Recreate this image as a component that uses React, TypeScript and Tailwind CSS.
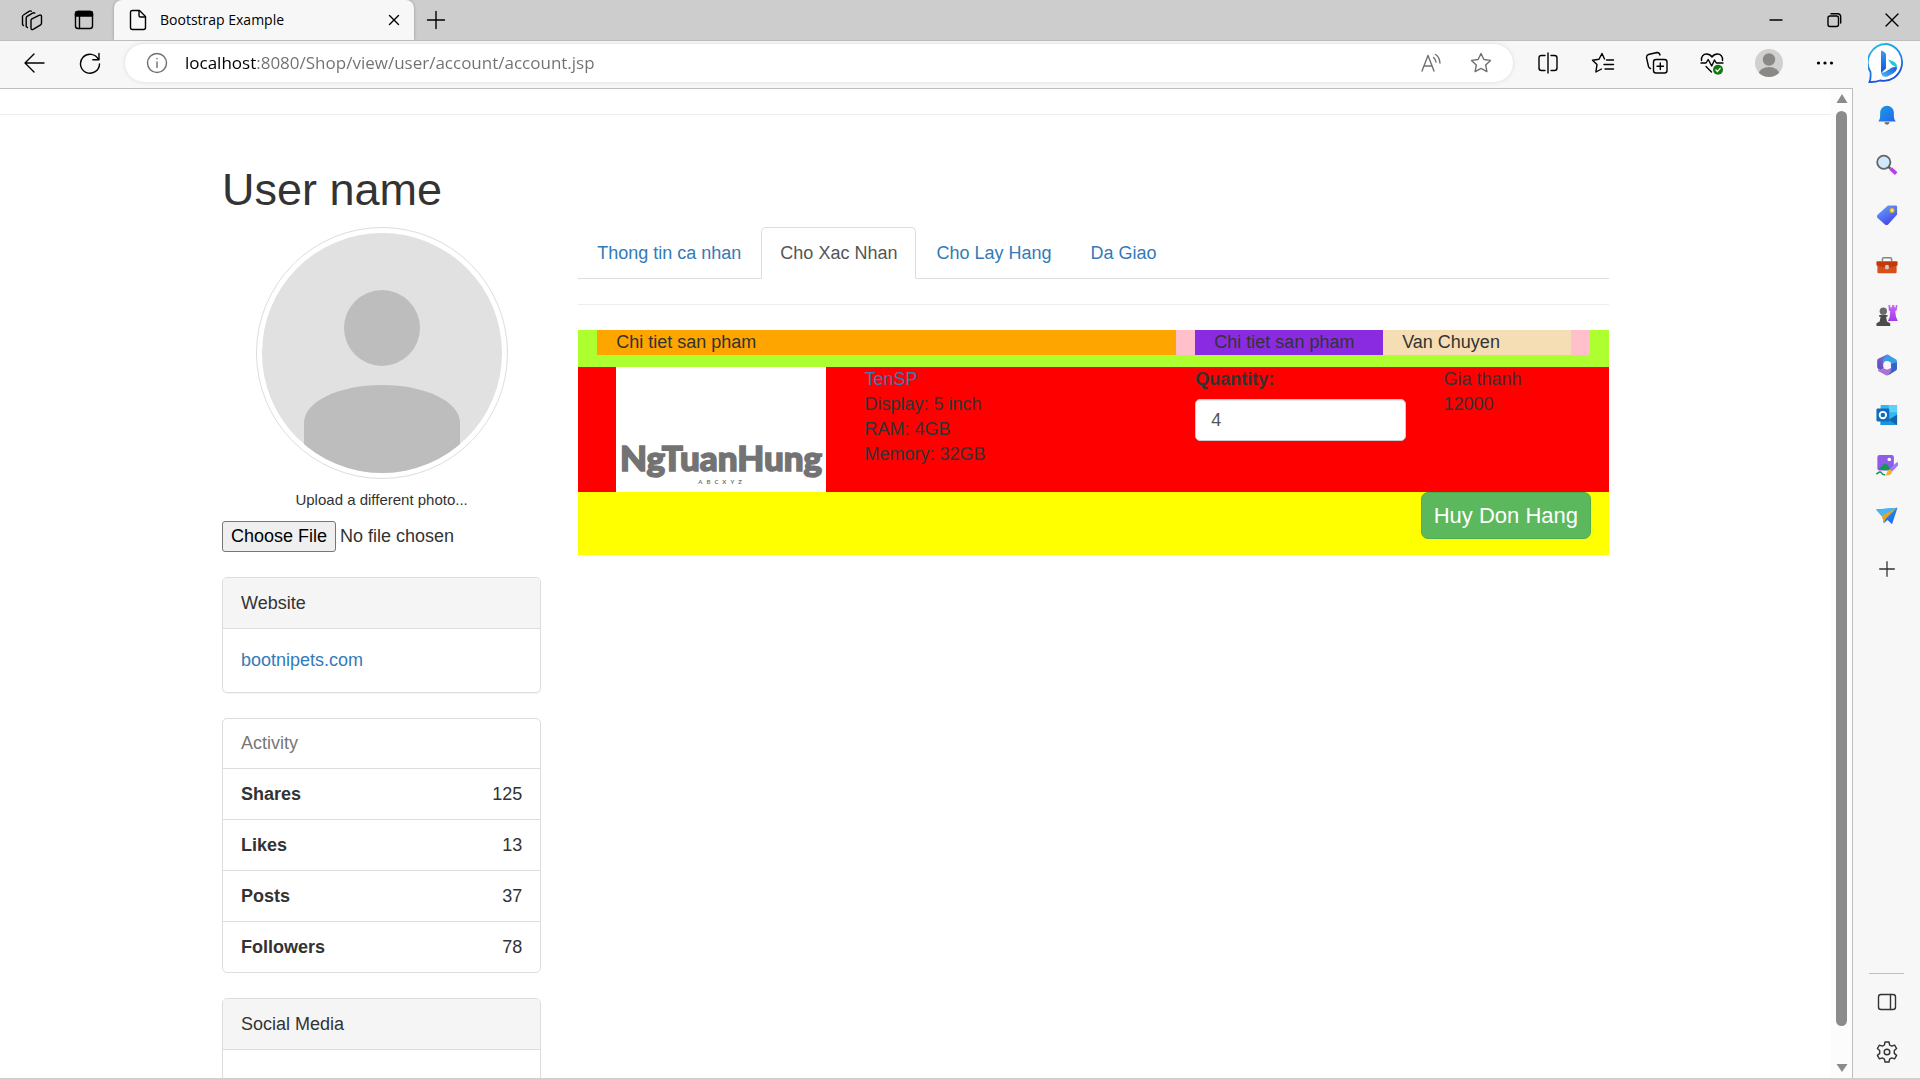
import React from "react";

type IconProps = { className?: string; children: React.ReactNode; viewBox?: string };

function Line({ className = "size-6", children, viewBox = "0 0 24 24" }: IconProps) {
  return (
    <svg className={className} viewBox={viewBox} fill="none" stroke="currentColor" strokeWidth="1.4" strokeLinecap="round" strokeLinejoin="round" aria-hidden="true">
      {children}
    </svg>
  );
}

const STAR = "M12 2.5l2.9 6 6.6.9-4.8 4.6 1.2 6.6L12 17.4l-5.9 3.2 1.2-6.6L2.5 9.400l6.600-.9z";

function TabStrip() {
  return (
    <header className="flex h-10 shrink-0 items-stretch bg-[#cdcdcd] text-black">
      <div className="flex w-[114px] items-center gap-7 pb-px pl-5">
        <button aria-label="Workspaces">
          <Line>
            <path d="M3.500 17.500l-1-.8V8.500q0-1 .9-1.500l6-3.800q1.200-.6 2 0" />
            <path d="M7.500 19.500l-1.300-.9V10q0-1 .9-1.600l5.500-3.300q1.200-.6 2.200 0" />
            <path d="M11.500 11.200l7.500-3.900q2.500-.8 2.500 1v7q0 1-.9 1.600l-7 4.200q-2.600 1.400-2.600-1v-7.300q0-1 .5-1.600z" />
          </Line>
        </button>
        <button aria-label="Tab actions">
          <Line>
            <rect x="3.500" y="3.500" width="17" height="17" rx="2.500" />
            <path d="M3.500 8V6Q3.500 3.500 6 3.500H18Q20.500 3.500 20.500 6V8Z" fill="currentColor" />
            <path d="M7.500 8v12" />
          </Line>
        </button>
      </div>
      <div className="flex w-[300px] items-center rounded-t-lg bg-[#f7f7f7] pb-px pl-3 pr-2 shadow-[0_0_3px_rgba(0,0,0,0.3)]">
        <Line>
          <path d="M6.500 2.500h7l6 6V19.500q0 2-2 2h-11q-2 0-2-2v-15q0-2 2-2z" />
          <path d="M13 2.800V7.500q0 1.500 1.500 1.500h4.500" />
        </Line>
        <span className="ml-[10px] flex-1 font-['Open_Sans',sans-serif] text-[14px]/5">Bootstrap Example</span>
        <button aria-label="Close tab">
          <Line><path d="M7.500 7.500l9 9m0-9l-9 9" /></Line>
        </button>
      </div>
      <button aria-label="New tab" className="ml-[10px] pb-px">
        <Line><path d="M12 3.500v17M3.500 12h17" /></Line>
      </button>
      <div className="ml-auto flex items-center gap-[34px] pb-px pr-4">
        <button aria-label="Minimize"><Line><path d="M6 12h12" /></Line></button>
        <button aria-label="Restore">
          <Line>
            <rect x="6" y="8" width="10.500" height="10.500" rx="2" />
            <path d="M9 5.700h6.500q3.200 0 3.200 3.200V15" />
          </Line>
        </button>
        <button aria-label="Close window"><Line><path d="M6 6l12 12m0-12L6 18" /></Line></button>
      </div>
    </header>
  );
}

function Bing() {
  return (
    <svg viewBox="1 1 38 40" className="h-10 w-[38px]" aria-hidden="true">
      <defs>
        <linearGradient id="bubble" x1="0" y1="0" x2=".4" y2="1"><stop stopColor="#25c8f0" /><stop offset="1" stopColor="#1d4fd8" /></linearGradient>
        <linearGradient id="stem" x1="0" y1="0" x2="0" y2="1"><stop stopColor="#3a9bf8" /><stop offset="1" stopColor="#1552dc" /></linearGradient>
        <linearGradient id="foot" x1="0" y1="1" x2="1" y2="0"><stop stopColor="#45bdf8" /><stop offset="1" stopColor="#1b55dd" /></linearGradient>
      </defs>
      <path d="M20 2a18 18 0 1 1-7 36.500q-4 1.700-10.500 1.500Q4 37 3.500 30A18.500 18.500 0 0 1 20 2z" fill="#fff" stroke="url(#bubble)" strokeWidth="1.800" />
      <path d="M14 8.500q3.500.5 5 3.500v14.500L14 31z" fill="url(#stem)" />
      <path d="M21 17.500q9 2 9 7v2.500q-1.500-3-5.500-4.500z" fill="#22c9dd" />
      <path d="M14 30.500q3 .5 5.500-1.500l5.500-3.500q5-1.500 5 1-.5 3-3.500 4.700l-6 3.200q-5.500 1.500-6.500-3.900z" fill="url(#foot)" />
    </svg>
  );
}

function Toolbar() {
  return (
    <div className="flex h-12 shrink-0 items-center border-t border-[#bdbdbd] bg-[#f7f7f7] pb-[3px] text-black">
      <div className="flex w-[125px] items-center gap-8 pl-[22px]">
        <button aria-label="Back"><Line><path d="M22 12H3M12 3L3 12l9 9" /></Line></button>
        <button aria-label="Reload">
          <Line><path d="M20.500 8.500A9.500 9.500 0 1 0 21.500 13M21 2.500v6.200h-6.200" /></Line>
        </button>
      </div>
      <div className="flex h-[38px] flex-1 items-center rounded-full bg-white px-5 text-[#707070] shadow-[0_0_4px_rgba(0,0,0,0.12)]">
        <button aria-label="Site information">
          <Line><circle cx="12" cy="12" r="9.500" /><path d="M12 11v5.500M12 7.500v.2" /></Line>
        </button>
        <input
          aria-label="Address"
          className="ml-4 min-w-0 flex-1 bg-[linear-gradient(to_right,#000_71px,#707070_71px)] bg-clip-text font-['Open_Sans',sans-serif] text-[17px]/7 text-transparent caret-black outline-none"
          defaultValue="localhost:8080/Shop/view/user/account/account.jsp"
        />
        <div className="flex items-center gap-[26px]">
          <button aria-label="Read aloud">
            <Line><path d="M3 20L9 4.500 15 20M5.300 15h7.500M14.500 6.500q2 1.500 2.500 4.500M16.500 3.500q4 2.500 4.500 8.500" /></Line>
          </button>
          <button aria-label="Add to favorites"><Line><path d={STAR} /></Line></button>
        </div>
      </div>
      <div className="flex w-[407px] items-center justify-between pl-[23px] pr-[14px]">
        <button aria-label="Split screen">
          <Line><path d="M12 2v20M9 4.500H5.500q-2.500 0-2.500 2.500v10q0 2.500 2.500 2.500H9M15 4.500h3.500q2.500 0 2.500 2.500v10q0 2.500-2.500 2.500H15" /></Line>
        </button>
        <button aria-label="Favorites">
          <Line><path d="M13.500 8L11 2.500 8 8.300 1.500 9.200 6 13.600 4.900 21 10.500 18M15.500 9h7M13 13.500h9.500M14 18h8.500" /></Line>
        </button>
        <button aria-label="Collections">
          <Line>
            <rect x="8.500" y="8.500" width="13.500" height="13.500" rx="2.500" />
            <path d="M15.300 12v6.500M12 15.300h6.500M5.500 17.500Q4 17 3.500 15.500L1.500 6.500Q1.500 4 3.500 3.500l8.500-2q2.500 0 3 2.500" />
          </Line>
        </button>
        <button aria-label="Browser essentials">
          <Line>
            <path d="M1.500 9.500C1 5.500 3.500 3 6.500 3q3.500 0 5.500 3 2-3 5.500-3c3 0 5.500 2.500 5 6.500M1 12h5l2.200-3.500 3.500 6.500 2.800-6 1.800 3H23M6 15.500l5.500 5.500" />
            <circle cx="18" cy="18.700" r="5" fill="#107c10" stroke="none" />
            <path d="M16 18.900l1.500 1.500 2.700-3" stroke="#fff" />
          </Line>
        </button>
        <button aria-label="Profile">
          <svg viewBox="0 0 28 28" className="size-7" aria-hidden="true">
            <clipPath id="profile"><circle cx="14" cy="14" r="14" /></clipPath>
            <g clipPath="url(#profile)"><rect width="28" height="28" fill="#d2d0ce" /><circle cx="14" cy="10.500" r="6.200" fill="#8a8886" /><ellipse cx="14" cy="25.500" rx="10.500" ry="7.500" fill="#8a8886" /></g>
          </svg>
        </button>
        <button aria-label="Settings and more">
          <svg viewBox="0 0 24 24" className="size-6" aria-hidden="true"><circle cx="5.500" cy="12" r="1.600" /><circle cx="12" cy="12" r="1.600" /><circle cx="18.500" cy="12" r="1.600" /></svg>
        </button>
        <button aria-label="Bing chat"><Bing /></button>
      </div>
    </div>
  );
}

const sideIcons: { name: string; art: React.ReactNode }[] = [
  { name: "Notifications", art: <><path d="M2.500 19q2-2 2-5V9.500a7.500 7.500 0 0 1 15 0V14q0 3 2 5z" fill="url(#s-blue)" /><path d="M9 20h6q-1 2.500-3 2.500T9 20z" fill="#666" /></> },
  { name: "Search", art: <><circle cx="8.500" cy="9" r="7.200" fill="#cfeafc" stroke="#666" strokeWidth="2" /><path d="M16 16l6 5.500" stroke="#b83df0" strokeWidth="4" /><path d="M13.500 14l2.300 2" stroke="#555" strokeWidth="2.500" /></> },
  { name: "Shopping", art: <><path d="M13 1.500h8.500q1.500 0 1.500 1.500v8.500L13 22.500q-1.500 1-3 0L1.500 15q-1-1.500 0-3z" fill="url(#s-tag)" /><circle cx="17.500" cy="7" r="2" fill="#eee" stroke="#e9b800" strokeWidth="1.500" /></> },
  { name: "Tools", art: <><path d="M7 8V5.500Q7 4 8.500 4h7Q17 4 17 5.500V8" fill="none" stroke="#858585" strokeWidth="1.600" /><rect x="1.500" y="10" width="21" height="11" rx="1.500" fill="#d94f1a" /><path d="M.5 9q0-1 1-1h21q1 0 1 1v3.500q-11.500 4-23 0z" fill="#c23a0c" /><rect x="10" y="12" width="4" height="4.500" rx="1" fill="#ccc" /></> },
  { name: "Games", art: <><path d="M13.500 1h2v2.500h2V1H20v2.500h1.500V1h2l-1 6-1.500 1 .8 6 2 4.500H13l2-4.500.5-6-1.500-1z" fill="url(#s-rook)" /><circle cx="8" cy="7.800" r="4" fill="#6b6b6b" /><path d="M3.500 12h9v2H11l1 5 3.500 2v3H.5v-3L4 19l1-5H3.500z" fill="#4b4b4b" /></> },
  { name: "Microsoft 365", art: <><path d="M12 .5q1.500 0 3 1L8.500 6v9.500L5 17.500l-3-1.800q-.7-.7-.7-2V7.300q0-1.300 1-2z" fill="url(#s-365)" /><path d="M13 .8L22 6q.8.600.8 1.800V16l-6.800-2.500V9L12 7.500 8.500 9V5z" fill="#379fe6" /><path d="M22.800 9v7.300q0 1.200-1 1.800l-8.300 5-.5-4.600 3.500-2.300V11z" fill="#3b5fc2" /><path d="M2.500 16l2.500 1.500 3.500-2 3.500 1.800 4.500-2.200v3.400l-3.500 4.600q-1 .5-2.200 0L2.300 18.500z" fill="#a974d6" /><circle cx="12" cy="12" r="4.200" fill="#f7f7f7" /></> },
  { name: "Outlook", art: <><rect x="5" y="1" width="18" height="22" rx="1" fill="#35b6ef" /><path d="M14 1h8q1 0 1 1v7h-9z" fill="#5fd0f7" /><path d="M5 23L23 11.500V23z" fill="#1464ad" /><path d="M5 12l18 11H5z" fill="#1c93df" /><rect x=".5" y="5" width="14" height="14" rx="1.200" fill="#0f6cbd" /><circle cx="7.500" cy="12" r="3.500" fill="none" stroke="#fff" strokeWidth="2" /></> },
  { name: "Image creator", art: <><rect x="1.500" y="1" width="18" height="17" rx="2.500" fill="#8f5be8" /><circle cx="14.500" cy="6" r="2" fill="#fff" /><path d="M2.500 17L8 11.500q2-1.500 4 0l4.500 5.500q-5 1.500-14 0z" fill="#16945a" /><path d="M.5 22q4-4 5.500-1.500T10 22.500" fill="none" stroke="#16945a" strokeWidth="1.600" /><path d="M16 18l7-7" stroke="#9c7bf0" strokeWidth="3.600" strokeLinecap="round" /><path d="M10 23.500q1.500-1 2-3.500t3.500-3l2 2.200q0 4.500-7.500 4.300z" fill="#f5b32a" /></> },
  { name: "Drop", art: <><path d="M0 6l23.500-2-6 18-5-4.500L8.500 21 7 14z" fill="url(#s-blue)" /><path d="M0 6l23.500-2L7 13z" fill="#45b7f5" /><path d="M6.500 12.500L23 4.200 10.500 16l-2 5z" fill="#f0a11e" /></> },
];

function SideRail() {
  return (
    <aside className="flex w-[67px] shrink-0 flex-col items-center bg-[#f7f7f7] pt-4">
      <svg width="0" height="0" className="absolute" aria-hidden="true">
        <defs>
          <linearGradient id="s-blue" x1="0" y1="0" x2="1" y2="1"><stop stopColor="#149fe0" /><stop offset="1" stopColor="#2b63f0" /></linearGradient>
          <linearGradient id="s-tag" x1="0" y1="0" x2=".6" y2="1"><stop stopColor="#69acf8" /><stop offset="1" stopColor="#4346ee" /></linearGradient>
          <linearGradient id="s-rook" x1="0" y1="0" x2="0" y2="1"><stop stopColor="#cc66fa" /><stop offset="1" stopColor="#a13be8" /></linearGradient>
          <linearGradient id="s-365" x1="0" y1="1" x2="1" y2="0"><stop stopColor="#5b48b8" /><stop offset="1" stopColor="#8a78d8" /></linearGradient>
        </defs>
      </svg>
      <nav aria-label="Sidebar" className="flex flex-col items-center gap-[28px]">
        {sideIcons.map((icon) => (
          <button key={icon.name} aria-label={icon.name}>
            <svg viewBox="0 0 24 24" className="size-[22px]" aria-hidden="true">{icon.art}</svg>
          </button>
        ))}
        <button aria-label="Customize" className="mt-1"><Line className="size-[22px]"><path d="M12 4v16M4 12h16" /></Line></button>
      </nav>
      <div className="mt-auto flex w-[35px] flex-col items-center gap-[26px] border-t border-[#bfbfbf] pb-[14px] pt-4">
        <button aria-label="Hide sidebar">
          <Line><rect x="3.500" y="4.500" width="17" height="15" rx="2.500" /><path d="M15.500 4.500v15" /></Line>
        </button>
        <button aria-label="Sidebar settings">
          <Line>
            <path d="M10 2h4l.6 3 2 1.100 3-1 2 3.400-2.300 2v2.900l2.300 2-2 3.500-3-1-2 1.200-.6 2.900h-4l-.6-2.900-2-1.200-3 1-2-3.500 2.300-2v-2.900l-2.300-2 2-3.400 3 1L9.400 5z" />
            <circle cx="12" cy="12" r="2.800" />
          </Line>
        </button>
      </div>
    </aside>
  );
}

function Scrollbar() {
  return (
    <div aria-hidden="true" className="flex w-[22px] shrink-0 flex-col items-center border-r border-[#bdbdbd] bg-[#fcfcfc] py-[5px]">
      <svg viewBox="0 0 12 10" className="h-[10px] w-3"><path d="M6 0l5.500 9H.5z" fill="#8b8b8b" /></svg>
      <div className="mb-[37px] mt-[7px] w-[11px] flex-1 rounded-full bg-[#8b8b8b]" />
      <svg viewBox="0 0 12 10" className="h-[10px] w-3"><path d="M6 9L.5 1h11z" fill="#8b8b8b" /></svg>
    </div>
  );
}

function Panel({ title, children }: { title: string; children?: React.ReactNode }) {
  return (
    <section className="mb-[25px] rounded-[5px] border border-[#ddd] shadow-[0_1px_1px_rgba(0,0,0,0.05)]">
      <h2 className="rounded-t-[4px] border-b border-[#ddd] bg-[#f5f5f5] px-[18px] py-[12px] leading-[26px]">{title}</h2>
      <div className="min-h-[63px] p-[18px] leading-[26px]">{children}</div>
    </section>
  );
}

const activity: [string, number][] = [["Shares", 125], ["Likes", 13], ["Posts", 37], ["Followers", 78]];

function Profile() {
  return (
    <div className="pl-[19px] pr-[18px]">
      <div className="flex flex-col items-center">
        <div className="size-[252px] rounded-full border border-[#ddd] p-[5px]">
          <svg viewBox="0 0 240 240" className="size-[240px]" role="img" aria-label="avatar">
            <clipPath id="avatar"><circle cx="120" cy="120" r="120" /></clipPath>
            <g clipPath="url(#avatar)">
              <rect width="240" height="240" fill="#e1e1e1" />
              <circle cx="120" cy="95" r="38" fill="#bdbdbd" />
              <path d="M42 240V190C42 168 78 152 120 152S198 168 198 190V240z" fill="#bdbdbd" />
            </g>
          </svg>
        </div>
        <label htmlFor="photo" className="my-3 text-[15px]/[18px]">Upload a different photo...</label>
      </div>
      <input
        id="photo"
        type="file"
        className="block h-[31px] w-full leading-[27px] file:mr-1 file:h-[31px] file:rounded-[3px] file:border file:border-solid file:border-[#767676] file:bg-[#efefef] file:px-2 file:text-black"
      />
      <div className="mt-[25px]">
        <Panel title="Website"><a href="#website" className="text-[#337ab7]">bootnipets.com</a></Panel>
        <ul className="mb-[25px] divide-y divide-[#ddd] rounded-[5px] border border-[#ddd] leading-[26px]">
          <li className="h-[50px] px-[18px] py-[11px] text-[#777]">Activity</li>
          {activity.map(([name, count]) => (
            <li key={name} className="flex justify-between px-[18px] py-[12px]"><strong>{name}</strong><span>{count}</span></li>
          ))}
        </ul>
        <Panel title="Social Media" />
      </div>
    </div>
  );
}

const tabs = ["Thong tin ca nhan", "Cho Xac Nhan", "Cho Lay Hang", "Da Giao"];

function Orders() {
  return (
    <div className="px-[19px]">
      <nav className="flex gap-px border-b border-[#ddd]">
        {tabs.map((tab) => (
          <a
            key={tab}
            href="#orders"
            className={
              tab === "Cho Xac Nhan"
                ? "-mb-px rounded-t-[5px] border border-[#ddd] border-b-white bg-white px-[18px] py-[12px] leading-[26px] text-[#555]"
                : "-mb-px border border-transparent px-[18px] py-[12px] leading-[26px] text-[#337ab7]"
            }
          >
            {tab}
          </a>
        ))}
      </nav>
      <hr className="my-[25px] border-[#eee]" />
      <div className="grid grid-cols-12 bg-[#adff2f] px-[19px] pb-3">
        <div className="col-span-7 bg-[#ffa500] px-[19px]">Chi tiet san pham</div>
        <div className="col-span-5 grid grid-cols-2 bg-[#ffc0cb] px-[19px]">
          <div className="bg-[#8a2be2] px-[19px]">Chi tiet san pham</div>
          <div className="bg-[#f5deb3] px-[19px]">Van Chuyen</div>
        </div>
      </div>
      <div className="grid h-[125px] grid-cols-12 bg-[#ff0000] px-[19px]">
        <div className="col-span-3 px-[19px]">
          <div className="h-full bg-white">
            <svg viewBox="0 0 210 125" className="h-full w-full" role="img" aria-label="NgTuanHung ABCXYZ">
              <text x="105" y="104" textAnchor="middle" fontFamily="Lato, sans-serif" fontSize="35" fontWeight="900" fill="#737373" stroke="#737373" strokeWidth="1.500">NgTuanHung</text>
              <text x="106" y="117" textAnchor="middle" fontFamily="Lato, sans-serif" fontSize="6" fontWeight="700" letterSpacing="4" fill="#737373">ABCXYZ</text>
            </svg>
          </div>
        </div>
        <div className="col-span-4 px-[19px]">
          <a href="#product" className="text-[#337ab7]">TenSP</a>
          <p>Display: 5 inch</p>
          <p>RAM: 4GB</p>
          <p>Memory: 32GB</p>
        </div>
        <div className="col-span-3 px-[19px]">
          <label htmlFor="quantity" className="mb-[7px] block font-bold">Quantity:</label>
          <input id="quantity" defaultValue="4" className="block h-[42px] w-full rounded-[5px] border border-[#ccc] bg-white px-[15px] text-[#555] shadow-[inset_0_1px_1px_rgba(0,0,0,0.075)]" />
        </div>
        <div className="col-span-2 px-[19px]">
          <p>Gia thanh</p>
          <p>12000</p>
        </div>
      </div>
      <div className="flex h-[63px] items-start justify-end bg-[#ffff00] px-[18px]">
        <button className="h-[47px] rounded-[7px] border border-[#4cae4c] bg-[#5cb85c] px-[12px] pb-px text-[22px] text-white">Huy Don Hang</button>
      </div>
    </div>
  );
}

export default function App() {
  return (
    <div className="flex h-screen flex-col overflow-hidden border-b-2 border-[#d0d0d0] bg-white font-['Liberation_Sans',Arial,sans-serif] text-[18px]/[25px] text-[#333]">
      <TabStrip />
      <Toolbar />
      <div className="flex min-h-0 flex-1">
        <div className="flex min-w-0 flex-1 border-t border-[#bdbdbd]">
          <main className="min-w-0 flex-1 overflow-hidden">
            <hr className="mt-[25px] border-[#eee]" />
            <div className="mx-auto mt-[50px] max-w-[1463px] px-[19px]">
              <h1 className="mb-[12px] px-[19px] text-[45px]/[50px]">User name</h1>
              <div className="grid grid-cols-[1fr_3fr]">
                <Profile />
                <Orders />
              </div>
            </div>
          </main>
          <Scrollbar />
        </div>
        <SideRail />
      </div>
    </div>
  );
}
